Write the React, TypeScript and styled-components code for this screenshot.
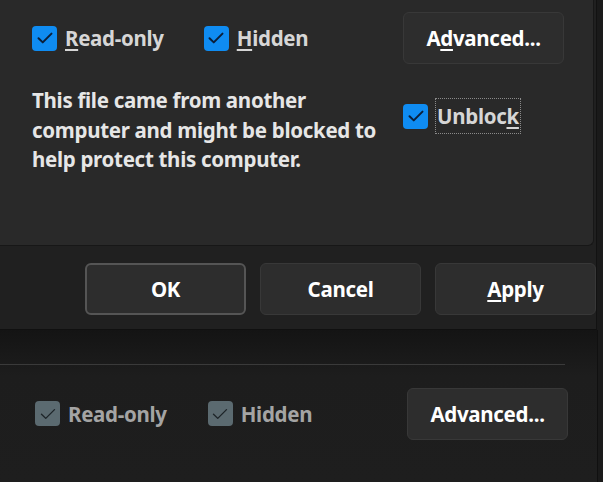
import styled, { createGlobalStyle } from "styled-components";

const GlobalStyle = createGlobalStyle`
  body {
    margin: 0;
    background: #1b1b1b;
    font-family: "Noto Sans", "Open Sans", sans-serif;
  }
`;

const Screen = styled.div`
  width: 603px;
  height: 482px;
  overflow: hidden;
  display: flex;
  flex-direction: column;
  background: #1a1a1a;
`;

const Dialog = styled.div`
  width: 597px;
  height: 330px;
  flex-shrink: 0;
  display: flex;
  flex-direction: column;
  background: #202020;
  border-right: 1px solid #121212;
  border-bottom: 1px solid #101010;
  box-sizing: border-box;
`;

const Panel = styled.div`
  width: 594px;
  height: 246px;
  box-sizing: border-box;
  background: #292929;
  border-right: 1px solid #171717;
  border-bottom: 1px solid #171717;
  border-bottom-right-radius: 6px;
  padding: 12px 29px 0 32px;
  display: flex;
  flex-direction: column;
`;

const Row = styled.div`
  display: flex;
  align-items: center;
  height: 52px;
`;

const Check = styled.label<{ $gap?: number }>`
  display: flex;
  align-items: center;
  gap: 8px;
  margin-right: ${(p) => p.$gap ?? 0}px;
  font-size: 20.5px;
  font-weight: 700;
`;

const Box = styled.span<{ $disabled?: boolean }>`
  width: 25px;
  height: 25px;
  border-radius: 4px;
  flex-shrink: 0;
  display: flex;
  align-items: center;
  justify-content: center;
  background: ${(p) => (p.$disabled ? "#5b6a70" : "#0f8cf2")};
`;

const Label = styled.span<{ $focus?: boolean; $dim?: boolean }>`
  color: ${(p) => (p.$dim ? "#a4a4a4" : "#d6d6d6")};
  padding: ${(p) => (p.$focus ? "3px 1px" : "0")};
  outline: ${(p) => (p.$focus ? "1px dotted #8a8a8a" : "none")};
  letter-spacing: -0.3px;
`;

const Key = styled.u`
  text-decoration-thickness: 2px;
  text-underline-offset: 3px;
`;

const Button = styled.button<{ $default?: boolean }>`
  width: 161px;
  height: 52px;
  border-radius: 6px;
  background: #2d2d2d;
  border: ${(p) => (p.$default ? "2px solid #555555" : "1px solid #383838")};
  color: #ffffff;
  font-family: inherit;
  font-size: 20.5px;
  font-weight: 700;
  letter-spacing: -0.3px;
  padding: 0;
`;

const PushRight = styled.div`
  margin-left: auto;
`;

const InfoRow = styled.div`
  display: flex;
  align-items: flex-start;
  margin-top: 22px;
`;

const Info = styled.p`
  margin: 0;
  width: 361px;
  font-size: 20.5px;
  font-weight: 700;
  line-height: 29.5px;
  color: #e6e6e6;
  letter-spacing: -0.3px;
`;

const UnblockSlot = styled.div`
  margin-left: 10px;
  margin-top: 13px;
`;

const Footer = styled.div`
  display: flex;
  justify-content: flex-end;
  gap: 14px;
  padding: 17px 0 0 0;
`;

const BackDialog = styled.div`
  width: 597px;
  flex: 1;
  background: linear-gradient(#141414, #1d1d1d 30%, #1e1e1e);
  border-right: 1px solid #101010;
  display: flex;
  flex-direction: column;
`;

const Separator = styled.div`
  width: 565px;
  height: 1px;
  background: #3a3a3a;
  margin-top: 34px;
`;

const BackRow = styled.div`
  display: flex;
  align-items: center;
  padding: 22px 29px 0 35px;
  height: 53px;
`;

const CheckMark = ({ disabled }: { disabled?: boolean }) => (
  <svg width="20" height="20" viewBox="0 0 16 16">
    <path
      d="M2.8 8.2 L6.2 11.5 L13.2 4.5"
      fill="none"
      stroke={disabled ? "#1d2428" : "#0b1f3a"}
      strokeWidth={disabled ? 1.1 : 1.6}
      strokeLinecap="round"
      strokeLinejoin="round"
    />
  </svg>
);

const App = () => {
  return (
    <>
      <GlobalStyle />
      <Screen>
        <Dialog>
          <Panel>
            <Row>
              <Check $gap={40}>
                <Box>
                  <CheckMark />
                </Box>
                <Label>
                  <Key>R</Key>ead-only
                </Label>
              </Check>
              <Check>
                <Box>
                  <CheckMark />
                </Box>
                <Label>
                  <Key>H</Key>idden
                </Label>
              </Check>
              <PushRight>
                <Button>
                  A<Key>d</Key>vanced...
                </Button>
              </PushRight>
            </Row>
            <InfoRow>
              <Info>
                This file came from another computer and might be blocked to
                help protect this computer.
              </Info>
              <UnblockSlot>
                <Check>
                  <Box>
                    <CheckMark />
                  </Box>
                  <Label $focus>
                    Unbloc<Key>k</Key>
                  </Label>
                </Check>
              </UnblockSlot>
            </InfoRow>
          </Panel>
          <Footer>
            <Button $default>OK</Button>
            <Button>Cancel</Button>
            <Button>
              <Key>A</Key>pply
            </Button>
          </Footer>
        </Dialog>
        <BackDialog>
          <Separator />
          <BackRow>
            <Check $gap={41}>
              <Box $disabled>
                <CheckMark disabled />
              </Box>
              <Label $dim>Read-only</Label>
            </Check>
            <Check>
              <Box $disabled>
                <CheckMark disabled />
              </Box>
              <Label $dim>Hidden</Label>
            </Check>
            <PushRight>
              <Button>Advanced...</Button>
            </PushRight>
          </BackRow>
        </BackDialog>
      </Screen>
    </>
  );
};

export default App;
